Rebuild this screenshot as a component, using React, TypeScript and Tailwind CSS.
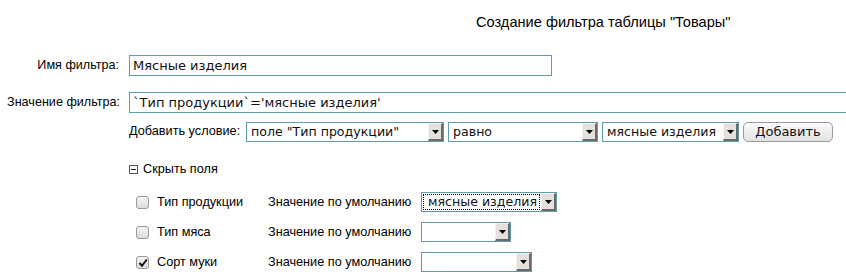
import React from "react";

const dv = { fontFamily: '"DejaVu Sans", sans-serif' } as React.CSSProperties;
const lb = { fontFamily: '"Liberation Sans", Arial, sans-serif' } as React.CSSProperties;

function Arrow() {
  return (
    <div className="flex h-full w-[15px] shrink-0 items-center justify-center border-l border-t border-l-[#f4f2f0] border-t-[#f4f2f0] border-r-2 border-b-2 border-r-[#6a6a6a] border-b-[#6a6a6a] bg-[#e4e0dc]">
      <svg width="7" height="4" viewBox="0 0 7 4">
        <path d="M0 0h7L3.5 4z" fill="#000" />
      </svg>
    </div>
  );
}

function Select({ w, text, focus }: { w: string; text?: string; focus?: boolean }) {
  return (
    <div className={`flex h-[20px] items-stretch border border-[#5f9ea6] bg-white ${w}`}>
      <div className={`flex flex-1 items-center whitespace-nowrap pl-[4px] text-[12.6px] text-[#111] ${focus ? "m-[1px] mr-[1px] border border-dotted border-black pl-[2px]" : ""}`} style={dv}>
        {text}
      </div>
      <Arrow />
    </div>
  );
}

function Check({ checked }: { checked?: boolean }) {
  return (
    <div className="relative h-[13px] w-[13px] rounded-[3px] border border-[#9a9a9a] bg-gradient-to-b from-[#f4f4f4] to-[#dcdcdc]">
      {checked && (
        <svg className="absolute left-[1px] top-[1px]" width="10" height="10" viewBox="0 0 10 10">
          <path d="M1.5 5 L4 7.8 L8.8 1.5" stroke="#111" strokeWidth="2" fill="none" />
        </svg>
      )}
    </div>
  );
}

export default function App() {
  return (
    <div className="h-[280px] w-[846px] overflow-hidden bg-white text-black">
      <div className="flex h-[45px] items-center pl-[476px] pt-[1px] text-[14.6px]" style={lb}>
        Создание фильтра таблицы "Товары"
      </div>
      <div className="flex items-center pt-[10px]">
        <div className="w-[119px] text-right text-[12.6px]" style={lb}>Имя фильтра:</div>
        <div className="ml-[10px] flex h-[21px] w-[423px] items-center border border-[#5f9ea6] pl-[3px] text-[13px] text-[#111]" style={dv}>
          Мясные изделия
        </div>
      </div>
      <div className="flex items-center pt-[16px]">
        <div className="w-[120px] text-right text-[12.6px]" style={lb}>Значение фильтра:</div>
        <div className="ml-[9px] flex h-[21px] flex-1 items-center border border-r-0 border-[#5f9ea6] pl-[3px] text-[13px] text-[#111]" style={dv}>
          `Тип продукции`='мясные изделия'
        </div>
      </div>
      <div className="flex items-center gap-[4px] pl-[129px] pt-[9px]">
        <div className="w-[113px] text-[12.7px]" style={lb}>Добавить условие:</div>
        <Select w="w-[198px]" text='поле "Тип продукции"' />
        <Select w="w-[150px]" text="равно" />
        <Select w="w-[137px]" text="мясные изделия" />
        <div className="flex h-[20px] w-[90px] items-center justify-center rounded-[5px] border border-[#9a9a9a] bg-gradient-to-b from-[#fafafa] to-[#e2e2e2] text-[13px] text-[#111]" style={dv}>
          Добавить
        </div>
      </div>
      <div className="flex items-center gap-[5px] pl-[129px] pt-[18px]">
        <div className="flex h-[9px] w-[9px] items-center justify-center border border-[#555]">
          <div className="h-[1px] w-[5px] bg-[#222]" />
        </div>
        <div className="text-[12.7px]" style={lb}>Скрыть поля</div>
      </div>
      {[
        { name: "Тип продукции", w: "w-[136px]", text: "мясные изделия", focus: true },
        { name: "Тип мяса", w: "w-[90px]", text: "" },
        { name: "Сорт муки", w: "w-[111px]", text: "", checked: true },
      ].map((r, i) => (
        <div key={i} className={`flex h-[30px] items-center ${i === 0 ? "mt-[8px]" : ""}`}>
          <div className="ml-[136px] w-[21px]">
            <Check checked={r.checked} />
          </div>
          <div className="w-[111px] text-[12.7px]" style={lb}>{r.name}</div>
          <div className="w-[153px] text-[12.7px]" style={lb}>Значение по умолчанию</div>
          <Select w={r.w} text={r.text} focus={r.focus} />
        </div>
      ))}
    </div>
  );
}
